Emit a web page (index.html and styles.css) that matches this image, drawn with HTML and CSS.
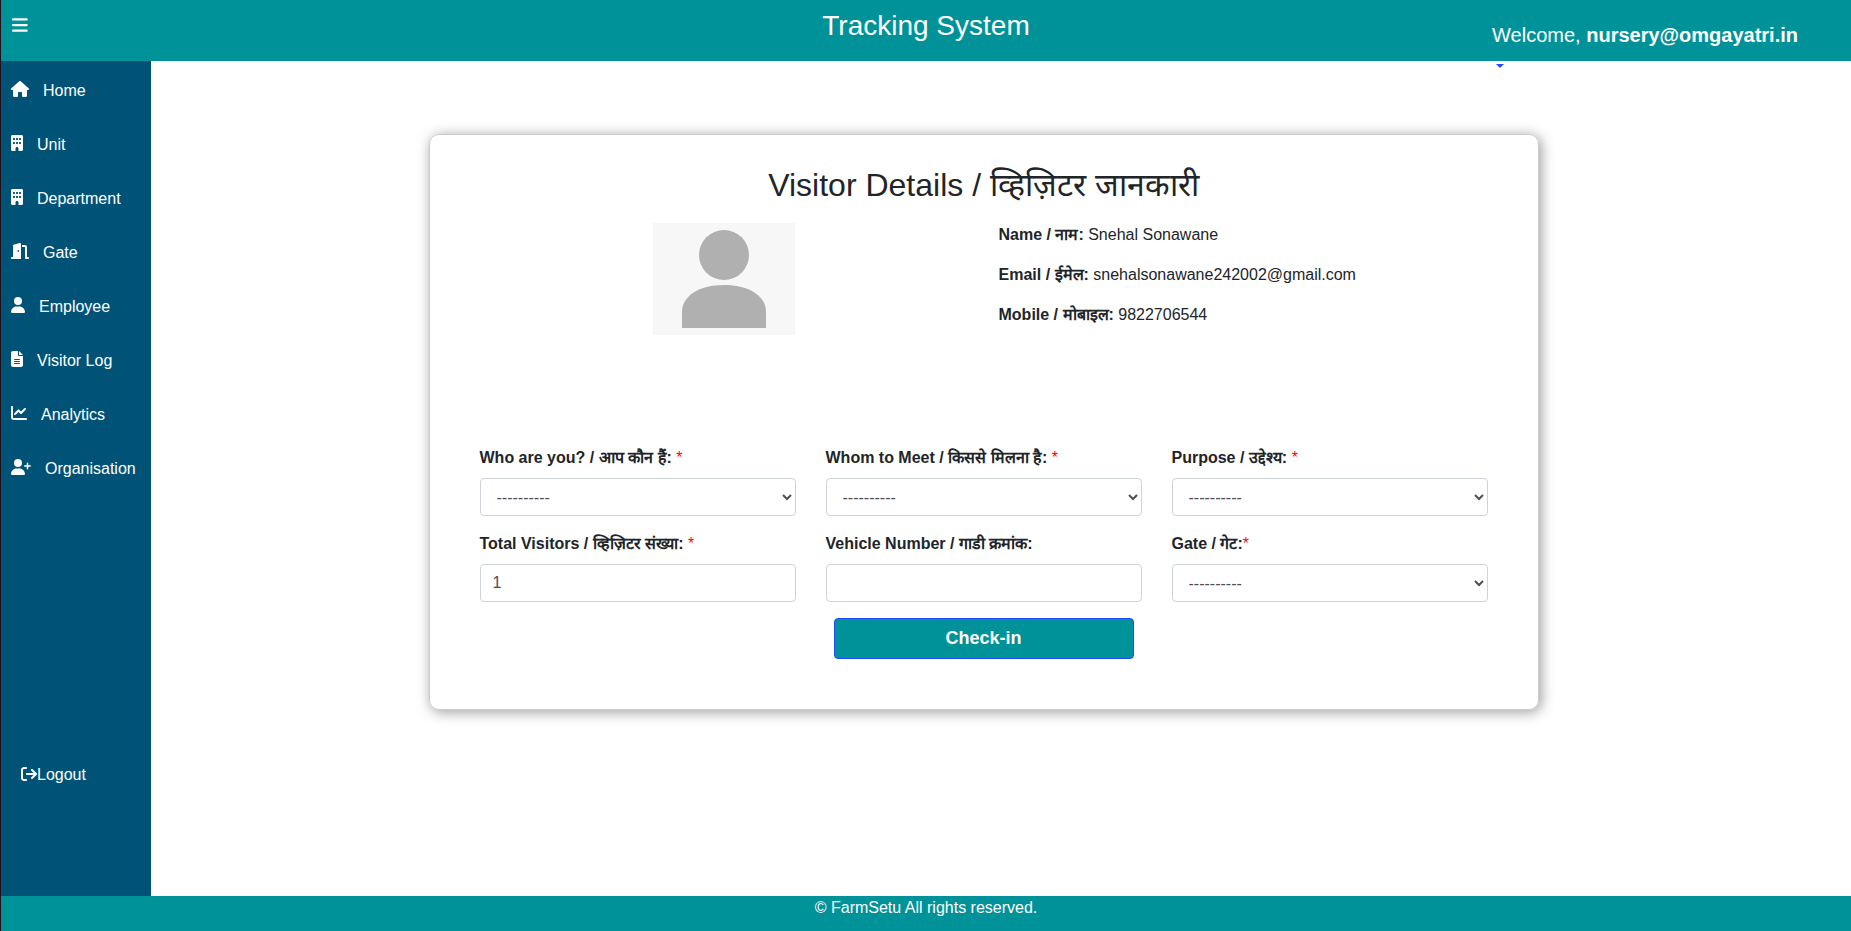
FILE: index.html
```html
<!DOCTYPE html>
<html lang="en">
<head>
<meta charset="utf-8">
<meta name="viewport" content="width=device-width, initial-scale=1">
<title>Tracking System</title>
<link rel="stylesheet" href="styles.css">
</head>
<body>
<header class="topbar">
  <button class="menu-toggle" type="button" aria-label="Toggle menu">
    <svg class="menu-icon" viewBox="0 0 448 512" aria-hidden="true"><path d="M0 96C0 78.3 14.3 64 32 64H416c17.7 0 32 14.3 32 32s-14.3 32-32 32H32C14.3 128 0 113.7 0 96zM0 256c0-17.7 14.3-32 32-32H416c17.7 0 32 14.3 32 32s-14.3 32-32 32H32c-17.7 0-32-14.3-32-32zM448 416c0 17.7-14.3 32-32 32H32c-17.7 0-32-14.3-32-32s14.3-32 32-32H416c17.7 0 32 14.3 32 32z"/></svg>
  </button>
  <h1 class="brand">Tracking System</h1>
  <div class="account">
    <span class="welcome">Welcome, <strong>nursery@omgayatri.in</strong></span>
    <button class="account-caret" type="button" aria-label="Account menu"></button>
  </div>
</header>

<div class="shell">
  <nav class="sidebar">
    <ul class="nav-list">
      <li><a class="nav-link" href="#"><svg class="icon" viewBox="0 0 576 512" aria-hidden="true"><path d="M575.8 255.500c0 18-15 32.100-32 32.100h-32l.7 160.200c0 2.700-.2 5.400-.5 8.100V472c0 22.100-17.900 40-40 40H456c-1.100 0-2.200 0-3.300-.1c-1.400 .1-2.800 .1-4.200 .1H416 392c-22.100 0-40-17.900-40-40V448 384c0-17.700-14.300-32-32-32H256c-17.700 0-32 14.300-32 32v64 24c0 22.100-17.900 40-40 40H160 128.100c-1.500 0-3-.1-4.500-.2c-1.200 .1-2.400 .2-3.600 .2H104c-22.100 0-40-17.900-40-40V360c0-.9 0-1.900 .1-2.800V287.600H32c-18 0-32-14-32-32.100c0-9 3-17 10-24L266.400 8c7-7 15-8 22-8s15 2 21 7L564.800 231.500c8 7 12 15 11 24z"/></svg><span>Home</span></a></li>
      <li><a class="nav-link" href="#"><svg class="icon" viewBox="0 0 384 512" aria-hidden="true"><path d="M48 0C21.500 0 0 21.500 0 48V464c0 26.500 21.500 48 48 48h96V432c0-26.500 21.500-48 48-48s48 21.500 48 48v80h96c26.500 0 48-21.500 48-48V48c0-26.500-21.500-48-48-48H48zM64 240c0-8.800 7.200-16 16-16h32c8.800 0 16 7.200 16 16v32c0 8.800-7.200 16-16 16H80c-8.800 0-16-7.200-16-16V240zm112-16h32c8.800 0 16 7.200 16 16v32c0 8.800-7.200 16-16 16H176c-8.800 0-16-7.200-16-16V240c0-8.800 7.200-16 16-16zm80 16c0-8.800 7.200-16 16-16h32c8.800 0 16 7.200 16 16v32c0 8.800-7.200 16-16 16H272c-8.800 0-16-7.200-16-16V240zM80 96h32c8.800 0 16 7.200 16 16v32c0 8.800-7.200 16-16 16H80c-8.800 0-16-7.200-16-16V112c0-8.800 7.200-16 16-16zm80 16c0-8.800 7.200-16 16-16h32c8.800 0 16 7.200 16 16v32c0 8.800-7.200 16-16 16H176c-8.800 0-16-7.200-16-16V112zM272 96h32c8.800 0 16 7.200 16 16v32c0 8.800-7.200 16-16 16H272c-8.800 0-16-7.200-16-16V112c0-8.800 7.200-16 16-16z"/></svg><span>Unit</span></a></li>
      <li><a class="nav-link" href="#"><svg class="icon" viewBox="0 0 384 512" aria-hidden="true"><path d="M48 0C21.500 0 0 21.500 0 48V464c0 26.500 21.500 48 48 48h96V432c0-26.500 21.500-48 48-48s48 21.500 48 48v80h96c26.500 0 48-21.500 48-48V48c0-26.500-21.500-48-48-48H48zM64 240c0-8.800 7.200-16 16-16h32c8.800 0 16 7.200 16 16v32c0 8.800-7.200 16-16 16H80c-8.800 0-16-7.200-16-16V240zm112-16h32c8.800 0 16 7.200 16 16v32c0 8.800-7.200 16-16 16H176c-8.800 0-16-7.200-16-16V240c0-8.800 7.200-16 16-16zm80 16c0-8.800 7.200-16 16-16h32c8.800 0 16 7.200 16 16v32c0 8.800-7.200 16-16 16H272c-8.800 0-16-7.200-16-16V240zM80 96h32c8.800 0 16 7.200 16 16v32c0 8.800-7.200 16-16 16H80c-8.800 0-16-7.200-16-16V112c0-8.800 7.200-16 16-16zm80 16c0-8.800 7.200-16 16-16h32c8.800 0 16 7.200 16 16v32c0 8.800-7.200 16-16 16H176c-8.800 0-16-7.200-16-16V112zM272 96h32c8.800 0 16 7.200 16 16v32c0 8.800-7.200 16-16 16H272c-8.800 0-16-7.200-16-16V112c0-8.800 7.200-16 16-16z"/></svg><span>Department</span></a></li>
      <li><a class="nav-link" href="#"><svg class="icon" viewBox="0 0 576 512" aria-hidden="true"><path d="M320 32c0-9.900-4.500-19.200-12.300-25.200S289.800-1.400 280.200 1l-179.900 45C79 51.300 64 70.500 64 92.500V448H32c-17.700 0-32 14.300-32 32s14.300 32 32 32H96 288h32V480 32zM256 256c0 17.700-10.700 32-24 32s-24-14.300-24-32s10.700-32 24-32s24 14.300 24 32zm96-128h96V480c0 17.700 14.300 32 32 32h64c17.700 0 32-14.300 32-32s-14.300-32-32-32H512V128c0-35.300-28.700-64-64-64H352v64z"/></svg><span>Gate</span></a></li>
      <li><a class="nav-link" href="#"><svg class="icon" viewBox="0 0 448 512" aria-hidden="true"><path d="M224 256A128 128 0 1 0 224 0a128 128 0 1 0 0 256zm-45.700 48C79.800 304 0 383.800 0 482.300C0 498.700 13.300 512 29.700 512H418.300c16.400 0 29.700-13.300 29.700-29.700C448 383.800 368.200 304 269.700 304H178.300z"/></svg><span>Employee</span></a></li>
      <li><a class="nav-link" href="#"><svg class="icon" viewBox="0 0 384 512" aria-hidden="true"><path d="M64 0C28.700 0 0 28.700 0 64V448c0 35.300 28.700 64 64 64H320c35.300 0 64-28.700 64-64V160H256c-17.700 0-32-14.300-32-32V0H64zM256 0V128H384L256 0zM112 256H272c8.800 0 16 7.200 16 16s-7.200 16-16 16H112c-8.800 0-16-7.200-16-16s7.200-16 16-16zm0 64H272c8.800 0 16 7.200 16 16s-7.200 16-16 16H112c-8.800 0-16-7.200-16-16s7.200-16 16-16zm0 64H272c8.800 0 16 7.200 16 16s-7.200 16-16 16H112c-8.800 0-16-7.200-16-16s7.200-16 16-16z"/></svg><span>Visitor Log</span></a></li>
      <li><a class="nav-link" href="#"><svg class="icon" viewBox="0 0 512 512" aria-hidden="true"><path d="M64 64c0-17.700-14.300-32-32-32S0 46.300 0 64V400c0 44.200 35.800 80 80 80H480c17.700 0 32-14.300 32-32s-14.300-32-32-32H80c-8.800 0-16-7.200-16-16V64zm406.600 86.600c12.500-12.500 12.500-32.800 0-45.300s-32.800-12.500-45.300 0L320 210.700l-57.400-57.400c-12.500-12.500-32.800-12.500-45.300 0l-112 112c-12.500 12.500-12.500 32.800 0 45.300s32.800 12.500 45.300 0L240 221.300l57.400 57.400c12.500 12.500 32.800 12.500 45.300 0l128-128z"/></svg><span>Analytics</span></a></li>
      <li><a class="nav-link" href="#"><svg class="icon" viewBox="0 0 640 512" aria-hidden="true"><path d="M96 128a128 128 0 1 1 256 0A128 128 0 1 1 96 128zM0 482.300C0 383.800 79.800 304 178.300 304h91.400C368.200 304 448 383.800 448 482.300c0 16.400-13.300 29.700-29.700 29.700H29.700C13.300 512 0 498.700 0 482.300zM504 312V248H440c-13.300 0-24-10.700-24-24s10.700-24 24-24h64V136c0-13.300 10.700-24 24-24s24 10.700 24 24v64h64c13.300 0 24 10.700 24 24s-10.700 24-24 24H552v64c0 13.300-10.700 24-24 24s-24-10.700-24-24z"/></svg><span>Organisation</span></a></li>
    </ul>
    <a class="logout" href="#"><svg class="icon" viewBox="0 0 512 512" aria-hidden="true"><path d="M502.600 278.600c12.500-12.500 12.500-32.800 0-45.300l-128-128c-12.500-12.500-32.800-12.500-45.300 0s-12.500 32.800 0 45.300L402.700 224H192c-17.700 0-32 14.300-32 32s14.300 32 32 32H402.700l-73.400 73.400c-12.500 12.500-12.500 32.800 0 45.300s32.800 12.500 45.300 0l128-128zM160 96c17.700 0 32-14.300 32-32s-14.300-32-32-32H96C43 32 0 75 0 128V384c0 53 43 96 96 96h64c17.700 0 32-14.300 32-32s-14.300-32-32-32H96c-17.700 0-32-14.300-32-32V128c0-17.700 14.300-32 32-32h64z"/></svg><span>Logout</span></a>
  </nav>

  <main class="content">
    <section class="card">
      <h2 class="card-title">Visitor Details / व्हिज़िटर जानकारी</h2>
      <div class="profile">
        <svg class="avatar" viewBox="0 0 142 112" role="img" aria-label="Visitor photo"><rect width="142" height="112" fill="#f7f7f7"/><circle cx="71" cy="32" r="25" fill="#b0b0b0"/><path d="M29 105V89C29 73 46 62 71 62s42 11 42 27v16z" fill="#b0b0b0"/></svg>
        <div class="facts">
          <p><strong>Name / नाम:</strong> Snehal Sonawane</p>
          <p><strong>Email / ईमेल:</strong> snehalsonawane242002@gmail.com</p>
          <p><strong>Mobile / मोबाइल:</strong> 9822706544</p>
        </div>
      </div>
      <form class="checkin">
        <div class="fields">
          <div class="field">
            <label for="who"><b>Who are you? / आप कौन हैं:</b> <span class="required">*</span></label>
            <select class="control" id="who"><option>----------</option></select>
          </div>
          <div class="field">
            <label for="whom"><b>Whom to Meet / किससे मिलना है:</b> <span class="required">*</span></label>
            <select class="control" id="whom"><option>----------</option></select>
          </div>
          <div class="field">
            <label for="purpose"><b>Purpose / उद्देश्य:</b> <span class="required">*</span></label>
            <select class="control" id="purpose"><option>----------</option></select>
          </div>
          <div class="field">
            <label for="total"><b>Total Visitors / व्हिज़िटर संख्या:</b> <span class="required">*</span></label>
            <input class="control" id="total" type="number" value="1">
          </div>
          <div class="field">
            <label for="vehicle"><b>Vehicle Number / गाडी क्रमांक:</b></label>
            <input class="control" id="vehicle" type="text">
          </div>
          <div class="field">
            <label for="gate"><b>Gate / गेट:</b><span class="required">*</span></label>
            <select class="control" id="gate"><option>----------</option></select>
          </div>
        </div>
        <button class="submit" type="submit">Check-in</button>
      </form>
    </section>
  </main>
</div>

<footer class="footer">© FarmSetu All rights reserved.</footer>
</body>
</html>
```

FILE: styles.css
```css
:root {
  --teal: #009299;
  --navy: #005377;
  --blue: #1f4bff;
  --text: #212529;
}

* {
  box-sizing: border-box;
}

body {
  margin: 0;
  min-height: 100vh;
  display: flex;
  flex-direction: column;
  border-left: 1px solid #20121c;
  background: #fff;
  color: var(--text);
  font-family: "Liberation Sans", Arial, sans-serif;
  font-size: 16px;
  line-height: 24px;
}

h1,
h2,
p,
ul {
  margin: 0;
  padding: 0;
  font-weight: 400;
}

a {
  color: inherit;
  text-decoration: none;
}

.topbar {
  display: grid;
  grid-template-columns: 1fr auto 1fr;
  align-items: start;
  height: 61px;
  background: var(--teal);
  color: #fff;
}

.menu-toggle {
  justify-self: start;
  margin: 16px 0 0 11px;
  padding: 0;
  border: 0;
  background: none;
  color: inherit;
}

.menu-icon {
  display: block;
  height: 18px;
  fill: currentColor;
}

.brand {
  padding-top: 9px;
  font-size: 28px;
  line-height: 34px;
}

.account {
  position: relative;
  justify-self: end;
  margin-right: 53px;
  padding-top: 20px;
  font-size: 20px;
  line-height: 30px;
}

.account-caret {
  position: absolute;
  top: 64px;
  left: 4px;
  width: 0;
  height: 0;
  padding: 0;
  border: solid transparent;
  border-width: 4px 4px 0;
  border-top-color: var(--blue);
  background: none;
}

.shell {
  flex: 1;
  display: flex;
}

.sidebar {
  flex: 0 0 150px;
  display: flex;
  flex-direction: column;
  justify-content: space-between;
  padding: 3px 0 109px;
  background: var(--navy);
  color: #fff;
}

.nav-list {
  list-style: none;
}

.nav-link {
  display: flex;
  align-items: center;
  gap: 14px;
  padding: 15px 10px;
}

.icon {
  height: 16px;
  margin-bottom: 4px;
  fill: currentColor;
}

.logout {
  display: flex;
  align-items: center;
  padding-left: 20px;
}

.logout .icon {
  margin-bottom: 2px;
}

.content {
  flex: 1;
  padding: 73px 35px 24px 0;
}

.card {
  max-width: 1110px;
  margin: 0 auto;
  padding: 31px 50px 50px;
  border: 1px solid #ccc;
  border-radius: 10px;
  box-shadow: 2px 2px 14px rgba(0, 0, 0, 0.4);
}

.card-title {
  font-size: 32px;
  line-height: 38px;
  text-align: center;
}

.profile {
  display: grid;
  grid-template-columns: 1fr 1fr;
  gap: 30px;
  margin-top: 19px;
}

.avatar {
  justify-self: center;
  width: 142px;
}

.facts {
  display: grid;
  align-content: start;
  gap: 16px;
}

.facts p {
  height: 24px;
}

.checkin {
  margin-top: 111px;
}

.fields {
  display: grid;
  grid-template-columns: repeat(3, 1fr);
  gap: 16px 30px;
}

.field label {
  display: block;
  height: 24px;
  margin-bottom: 8px;
}

.required {
  color: red;
}

.control {
  display: block;
  width: 100%;
  height: 38px;
  padding: 6px 12px;
  border: 1px solid #ced4da;
  border-radius: 4px;
  background: #fff;
  color: #495057;
  font: inherit;
}

.submit {
  display: block;
  width: 300px;
  height: 41px;
  margin: 16px auto 0;
  border: 1px solid var(--blue);
  border-radius: 4px;
  background: var(--teal);
  color: #fff;
  font: bold 18px/27px "Liberation Sans", Arial, sans-serif;
}

.footer {
  height: 35px;
  background: var(--teal);
  color: #fff;
  text-align: center;
}
```
